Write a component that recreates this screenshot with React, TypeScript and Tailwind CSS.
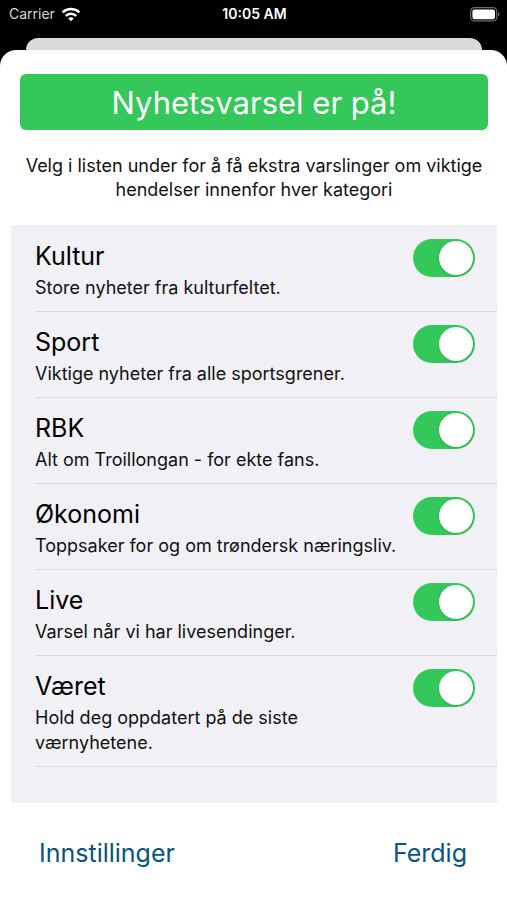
import { useState } from "react";

const CATEGORIES = [
  { id: "kultur", title: "Kultur", description: "Store nyheter fra kulturfeltet." },
  { id: "sport", title: "Sport", description: "Viktige nyheter fra alle sportsgrener." },
  { id: "rbk", title: "RBK", description: "Alt om Troillongan - for ekte fans." },
  { id: "okonomi", title: "Økonomi", description: "Toppsaker for og om trøndersk næringsliv." },
  { id: "live", title: "Live", description: "Varsel når vi har livesendinger." },
  { id: "vaeret", title: "Været", description: "Hold deg oppdatert på de siste værnyhetene." },
];

interface CategoryRowProps {
  id: string;
  title: string;
  description: string;
  checked: boolean;
  onToggle: () => void;
}

function CategoryRow({ id, title, description, checked, onToggle }: CategoryRowProps) {
  return (
    <li className="flex items-start border-b border-[#d9d9de] pt-3 pb-[11px] pr-[22px]">
      <label htmlFor={id} className="block flex-1 pr-4">
        <span className="block text-[25px] leading-9">{title}</span>
        <span className="block pt-px text-lg leading-[25px] text-[#111111]">{description}</span>
      </label>
      <input
        id={id}
        type="checkbox"
        role="switch"
        checked={checked}
        onChange={onToggle}
        className="mt-px h-[38px] w-[62px] shrink-0 appearance-none rounded-full bg-[#d9d9de] before:block before:m-[2px] before:size-[34px] before:rounded-full before:bg-white before:shadow-sm checked:bg-[#34c759] checked:before:ml-[26px]"
      />
    </li>
  );
}

function StatusBar() {
  return (
    <div className="grid h-7 grid-cols-3 items-center pl-[9px] pr-[7px] text-sm text-white">
      <div className="flex items-center gap-1.5 text-[#d8d8d8]">
        <span>Carrier</span>
        <svg viewBox="0 0 20 15" className="h-[15px] w-5" fill="none" stroke="white" strokeWidth="2.4">
          <path d="M1.6 5.4a12 12 0 0 1 16.8 0M4.7 8.9a7.5 7.5 0 0 1 10.6 0" />
          <path d="M10 14.3 7.2 11.5a4 4 0 0 1 5.6 0z" fill="white" stroke="none" />
        </svg>
      </div>
      <time className="text-center font-semibold">10:05 AM</time>
      <svg viewBox="0 0 30 15" className="h-[15px] w-[30px] justify-self-end">
        <rect x="0.7" y="0.7" width="26" height="13.2" rx="3.6" fill="none" stroke="#6b6b6b" strokeWidth="1.2" />
        <rect x="2.4" y="2.4" width="22.6" height="9.8" rx="2.2" fill="white" />
        <path d="M28 5.1v4.4q1.6-.8 1.6-2.2T28 5.1" fill="#6b6b6b" />
      </svg>
    </div>
  );
}

export default function App() {
  const [enabled, setEnabled] = useState<Record<string, boolean>>(
    Object.fromEntries(CATEGORIES.map((category) => [category.id, true]))
  );

  const handleToggle = (id: string) => {
    setEnabled((current) => ({ ...current, [id]: !current[id] }));
  };

  return (
    <div className="flex min-h-screen flex-col bg-black font-['Inter','Liberation_Sans',sans-serif] text-black">
      <StatusBar />
      {/* Edge of the screen behind the sheet */}
      <div className="ml-[26px] mr-[25px] mt-[10px] h-3 rounded-t-xl bg-[#d9d9d9]" />

      <main className="flex grow flex-col rounded-t-2xl bg-white pl-[11px] pr-[10px] pt-6">
        <h1 className="mx-[9px] rounded-md bg-[#34c759] pt-px text-center text-[31px] leading-[55px] text-white">
          Nyhetsvarsel er på!
        </h1>
        <p className="px-3 pt-6 pb-[23px] text-center text-lg leading-6 text-[#111111]">
          Velg i listen under for å få ekstra varslinger om viktige hendelser innenfor hver kategori
        </p>

        <ul className="bg-[#f1f0f5] pt-px pb-9 pl-6">
          {CATEGORIES.map((category) => (
            <CategoryRow
              key={category.id}
              {...category}
              checked={enabled[category.id]}
              onToggle={() => handleToggle(category.id)}
            />
          ))}
        </ul>

        <div className="flex justify-between pl-7 pr-[30px] pt-8 pb-7 text-[25px] leading-9 text-[#0b5380]">
          <button type="button">Innstillinger</button>
          <button type="button">Ferdig</button>
        </div>
      </main>
    </div>
  );
}
